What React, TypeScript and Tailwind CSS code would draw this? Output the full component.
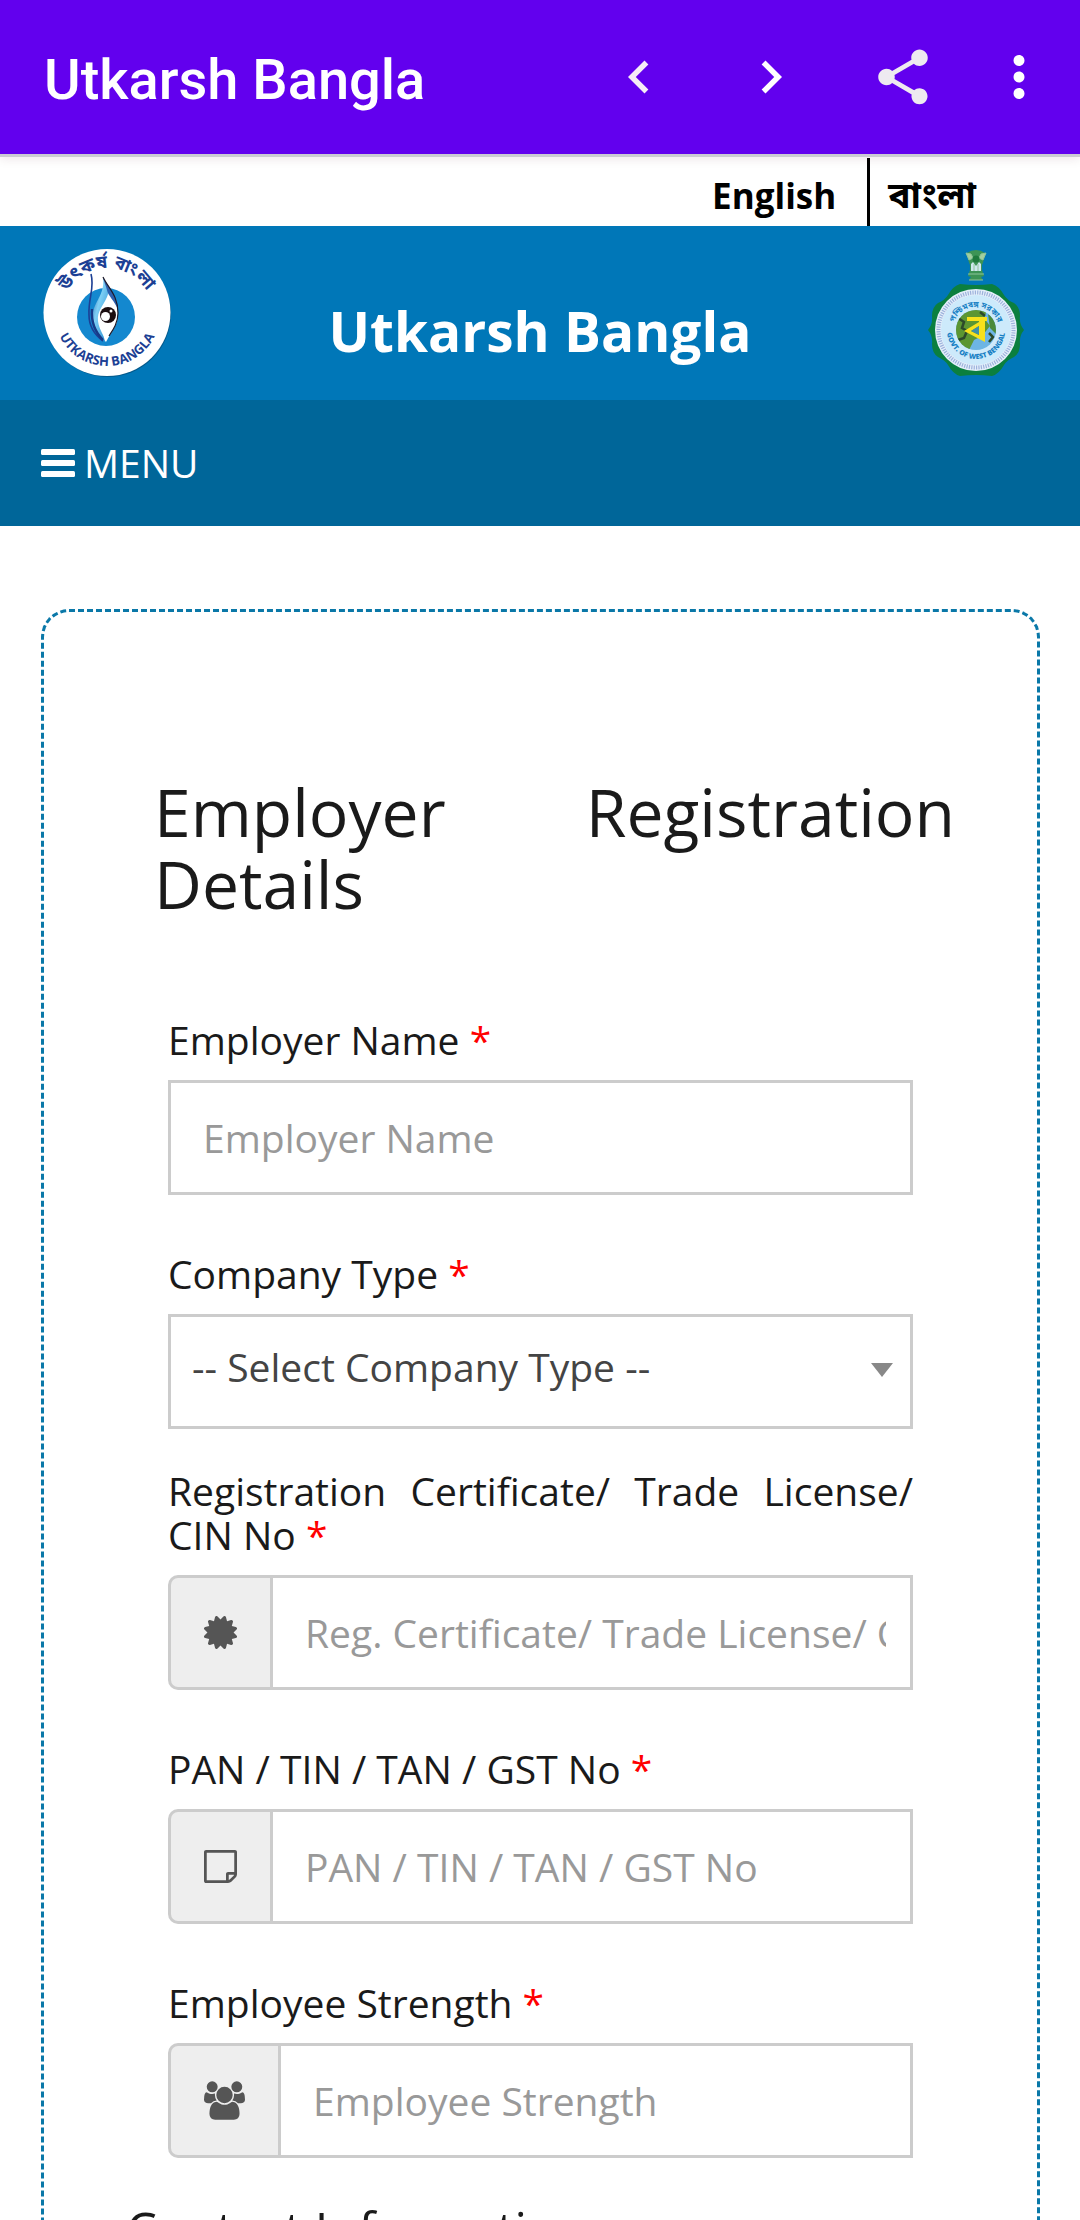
import React, { useState } from 'react';
import { MdChevronLeft, MdChevronRight, MdMoreVert, MdShare } from 'react-icons/md';

interface FieldProps {
  id: string;
  label: string;
  placeholder: string;
  icon?: React.ReactNode;
}

const CertificateIcon: React.FC = () => (
  <svg viewBox="0 128 1536 1536" className="size-[33px]" fill="currentColor" aria-hidden="true">
    <path d="M1376 896l138 135q30 28 20 70-12 41-52 51l-188 48 53 186q12 41-19 70-29 31-70 19l-186-53-48 188q-10 40-51 52-12 2-19 2-31 0-51-22l-135-138-135 138q-28 30-70 20-41-11-51-52l-48-188-186 53q-41 12-70-19-31-29-19-70l53-186-188-48q-40-10-52-51-10-42 20-70l138-135-138-135q-30-28-20-70 12-41 52-51l188-48-53-186q-12-41 19-70 29-31 70-19l186 53 48-188q10-41 51-51 41-12 70 19l135 139 135-139q29-30 70-19 41 10 51 51l48 188 186-53q41-12 70 19 31 29 19 70l-53 186 188 48q40 10 52 51 10 42-20 70z" />
  </svg>
);

const NoteIcon: React.FC = () => (
  <svg viewBox="0 128 1536 1536" className="size-[33px]" fill="currentColor" aria-hidden="true">
    <path d="M1400 1280h-248v248q29-10 41-22l185-185q12-12 22-41zm-280-128h288v-896h-1280v1280h896v-288q0-40 28-68t68-28zm416-928v1024q0 40-20 88t-48 76l-184 184q-28 28-76 48t-88 20h-1024q-40 0-68-28t-28-68v-1344q0-40 28-68t68-28h1344q40 0 68 28t28 68z" />
  </svg>
);

const UsersIcon: React.FC = () => (
  <svg viewBox="0 0 1920 1792" className="h-[39px] w-[41px]" fill="currentColor" aria-hidden="true">
    <path d="M593 896q-162 5-265 128h-134q-82 0-138-40.5t-56-118.5q0-353 124-353 6 0 43.5 21t97.5 42.5 119 21.5q67 0 133-23-5 37-5 66 0 139 81 256zm1071 637q0 120-73 189.5t-194 69.5h-874q-121 0-194-69.5t-73-189.5q0-53 3.5-103.5t14-109 26.5-108.5 43-97.5 62-81 85.5-53.5 111.5-20q10 0 43 21.5t73 48 107 48 135 21.5 135-21.5 107-48 73-48 43-21.5q61 0 111.5 20t85.5 53.5 62 81 43 97.5 26.5 108.5 14 109 3.5 103.5zm-1024-1277q0 106-75 181t-181 75-181-75-75-181 75-181 181-75 181 75 75 181zm704 384q0 159-112.5 271.5t-271.5 112.5-271.5-112.5-112.5-271.5 112.5-271.5 271.5-112.5 271.5 112.5 112.5 271.5zm576 225q0 78-56 118.5t-138 40.5h-134q-103-123-265-128 81-117 81-256 0-29-5-66 66 23 133 23 59 0 119-21.5t97.5-42.5 43.5-21q124 0 124 353zm-128-609q0 106-75 181t-181 75-181-75-75-181 75-181 181-75 181 75 75 181z" />
  </svg>
);

const UtkarshLogo: React.FC = () => (
  <svg viewBox="0 0 128 128" className="size-32" role="img" aria-label="Utkarsh Bangla logo">
    <defs>
      <path id="logo-top" d="M19 64a45 45 0 0 1 90 0" />
      <path id="logo-bottom" d="M11 64a53 53 0 0 0 106 0" />
      <linearGradient id="flame" x1="0" x2="1" y1="0" y2="1">
        <stop offset="0" stopColor="#1b4f9c" />
        <stop offset="0.4" stopColor="#7fd0f5" />
        <stop offset="1" stopColor="#1d86cf" />
      </linearGradient>
    </defs>
    <circle cx="65" cy="65" r="63" fill="#045a8c" />
    <circle cx="64" cy="63.5" r="63.5" fill="#fff" />
    <circle cx="63" cy="68" r="29" fill="#1488cf" />
    {/* flame shaped eye */}
    <path d="M60 28c1 9 15 17 15 37 0 12-7 18-12 28-8-9-14-16-11-28 2-13 12-19 8-37z" fill="#fff" />
    <path d="M60 28c2 9 8 12 4 20-4 9-10 14-9 24 1 9 6 13 7 21-9-8-14-18-12-30 3-13 12-18 10-35z" fill="url(#flame)" />
    <path d="M60 28c4 9 15 17 15 33-3-9-10-14-11-20-1-4-3-8-4-13z" fill="#2c5fae" />
    <path d="M60 28c5 11 15 18 15 36 0 10-5 17-9 23" fill="none" stroke="#1d1a2a" strokeWidth="1.2" />
    <path d="M48 25c4 14-3 24-2 41 0 12 6 20 14 26" fill="none" stroke="#1c3f94" strokeWidth="1.6" />
    <path d="M49 60c-1 13 3 23 11 31" fill="none" stroke="#173a87" strokeWidth="2.4" />
    <circle cx="65" cy="66" r="8" fill="#1b0d10" />
    <circle cx="62.5" cy="67.5" r="4.5" fill="#fff" />
    <circle cx="68" cy="62" r="1.5" fill="#fff" />
    <text className="font-['Noto_Sans_Bengali','Open_Sans',sans-serif] text-[18px] font-bold" fill="#1c3f94" textAnchor="middle">
      <textPath href="#logo-top" startOffset="50%">উৎকর্ষ বাংলা</textPath>
    </text>
    <text className="font-['Open_Sans',sans-serif] text-[13px] font-bold" fill="#1c3f94" textAnchor="middle">
      <textPath href="#logo-bottom" startOffset="50%">UTKARSH BANGLA</textPath>
    </text>
  </svg>
);

const GovernmentSeal: React.FC = () => (
  <svg viewBox="0 0 96 126" className="h-[126px] w-24" role="img" aria-label="Government of West Bengal seal">
    <defs>
      <path id="seal-top" d="M25 80a23 23 0 0 1 46 0" />
      <path id="seal-bottom" d="M19 80a29 29 0 0 0 58 0" />
      <clipPath id="seal-map">
        <circle cx="48" cy="80" r="20" />
      </clipPath>
    </defs>
    {/* lion capital */}
    <path d="M39 3q4-3 9-3t9 3l-1 6q-1 4-2 6v5l2 6-3 1 2 3H41l2-3-3-1 2-6v-5q-2-4-2-8z" fill="#3d9455" />
    <path d="M43 14l2-2 3 4 3-4 2 2v7H43z" fill="#cfe8ee" />
    <path d="M38 3l5 1 2 4-4 2zM58 3l-5 1-2 4 4 2zM41 30h14M40 24h16M46 14v7M50 14v7" fill="#a3cf9e" stroke="#8ec49a" strokeWidth="1" />
    <circle cx="48" cy="9" r="3.5" fill="#1f7a3c" />
    {/* scalloped rim */}
    <path d="M0 80q5-6 4-14 0-9 6-13 7-3 10-8 5-9 12-11 16 2 32 0 7 2 12 11 3 5 10 8 6 4 6 13-1 8 4 14-5 6-4 14 0 9-6 13-7 3-10 8-5 9-12 11-16-2-32 0-7-2-12-11-3-5-10-8-6-4-6-13 1-8-4-14z" fill="#0b7f3f" />
    <circle cx="48" cy="80" r="41" fill="#e4effa" />
    <circle cx="48" cy="80" r="37.5" fill="none" stroke="#9db2dc" strokeWidth="4" strokeDasharray="1.2 1.2" />
    <circle cx="48" cy="80" r="35" fill="#cdeafb" />
    <circle cx="48" cy="80" r="20" fill="#6db5e4" />
    <g clipPath="url(#seal-map)">
      <path d="M26 58h34l-4 10 6 8-8 10-8 4-6 12-14-8z" fill="#5c9632" />
      <path d="M60 64l12 6-4 14-6-6z" fill="#4b8a3b" />
      <path d="M30 68l6 4-2 6 5 3-3 7-6 2M52 62l5 4M61 92l4-5-4-4" fill="none" stroke="#2c4a2a" strokeWidth="2.5" />
    </g>
    <path d="M39 67h20v4h-2v21l-21-11 15-9v-1H39zm12 9l-8 5 8 4z" fill="#f7e11c" fillRule="evenodd" />
    <path d="M43 81l8-5v9z" fill="#3f8fa6" />
    <text className="font-['Noto_Sans_Bengali','Open_Sans',sans-serif] text-[8px] font-bold" fill="#1780c4" textAnchor="middle">
      <textPath href="#seal-top" startOffset="50%">পশ্চিমবঙ্গ সরকার</textPath>
    </text>
    <text className="font-['Open_Sans',sans-serif] text-[7px] font-extrabold" fill="#1780c4" textAnchor="middle">
      <textPath href="#seal-bottom" startOffset="50%">GOVT. OF WEST BENGAL</textPath>
    </text>
  </svg>
);

const FieldLabel: React.FC<{ htmlFor: string; children: React.ReactNode }> = ({ htmlFor, children }) => (
  <label htmlFor={htmlFor} className="mb-[18px] block text-justify leading-[44px]">
    {children} <span className="text-[#f00]">*</span>
  </label>
);

const TextField: React.FC<FieldProps> = ({ id, label, placeholder, icon }) => {
  const [value, setValue] = useState('');

  return (
    <div className="mb-[57px] last:mb-11">
      <FieldLabel htmlFor={id}>{label}</FieldLabel>
      <div className="flex">
        {icon && (
          <span className="flex items-center rounded-l-[10px] border-[3px] border-r-0 border-[#ccc] bg-[#eee] px-[33px] text-[#555]">
            {icon}
          </span>
        )}
        <input
          id={id}
          type="text"
          value={value}
          onChange={(e) => setValue(e.target.value)}
          placeholder={placeholder}
          className="h-[115px] w-full min-w-0 flex-1 border-[3px] border-[#ccc] bg-white pr-6 pl-8 text-[#444] placeholder:text-[#999]"
        />
      </div>
    </div>
  );
};

const AppBar: React.FC = () => (
  <header className="flex h-[157px] shrink-0 items-center justify-between border-b-[3px] border-[#cbcbd3] bg-[#6200ee] pr-[11px] pl-[44px] font-[Roboto,sans-serif] text-white shadow-[0_2px_10px_rgba(80,0,40,0.1)]">
    <h1 className="pt-1.5 text-[56px] leading-16 font-medium">Utkarsh Bangla</h1>
    <div className="flex text-[66px]">
      <button type="button" aria-label="Back" className="flex w-[132px] justify-center text-[#f6edf6]">
        <MdChevronLeft />
      </button>
      <button type="button" aria-label="Forward" className="flex w-[132px] justify-center">
        <MdChevronRight />
      </button>
      <button type="button" aria-label="Share" className="flex w-[132px] justify-center text-[#eeeaf0]">
        <MdShare />
      </button>
      <button type="button" aria-label="More options" className="flex w-[100px] justify-center">
        <MdMoreVert />
      </button>
    </div>
  </header>
);

export default function App() {
  const [companyType, setCompanyType] = useState('');

  return (
    <div className="flex h-screen flex-col overflow-hidden bg-white font-['Open_Sans',sans-serif] text-[39px] text-[#1a1a1a]">
      <AppBar />

      <main className="min-h-0 flex-1 overflow-y-auto [scrollbar-width:none]">
        <div className="flex h-[69px] justify-end pt-px pr-[104px] leading-[76px] font-bold text-black">
          <a href="#english" className="border-r-[3px] border-black pr-[31px] text-[35px]">English</a>
          <a href="#bangla" lang="bn" className="pt-[3px] pl-[18px] font-['Noto_Sans_Bengali','Open_Sans',sans-serif] text-[37px]">বাংলা</a>
        </div>

        <div className="grid h-[174px] grid-cols-[1fr_auto_1fr] items-center bg-[#0077b8] px-[43px]">
          <UtkarshLogo />
          <h2 className="pt-9 text-[55px] leading-[78px] font-bold text-white">Utkarsh Bangla</h2>
          <div className="flex justify-end pr-[13px]">
            <GovernmentSeal />
          </div>
        </div>

        <nav className="flex h-[126px] items-center bg-[#006699] px-[41px] text-white">
          <button type="button" className="flex items-center gap-[9px]">
            <svg viewBox="0 0 34 28" className="h-7 w-[34px]" fill="currentColor" aria-hidden="true">
              <rect width="34" height="6" rx="1.5" />
              <rect y="11" width="34" height="6" rx="1.5" />
              <rect y="22" width="34" height="6" rx="1.5" />
            </svg>
            MENU
          </button>
        </nav>

        <section className="mr-10 ml-[41px] mt-[83px] rounded-[28px] border-[3px] border-dashed border-[#0a78a8] px-[82px] pt-[163px] pb-24">
          <h3 className="mb-[99px] pl-7 text-justify text-[66px] leading-[72px]">Employer Registration Details</h3>

          <form>
            <div className="flow-root px-[42px]">
              <TextField id="employer-name" label="Employer Name" placeholder="Employer Name" />

              <div className="mb-10">
                <FieldLabel htmlFor="company-type">Company Type</FieldLabel>
                <div className="relative">
                  <select
                    id="company-type"
                    value={companyType}
                    onChange={(e) => setCompanyType(e.target.value)}
                    className="h-[115px] w-full appearance-none border-[3px] border-[#ccc] bg-white px-[21px] pb-2 text-[#444]"
                  >
                    <option value="">-- Select Company Type --</option>
                    <option value="private">Private Limited</option>
                    <option value="public">Public Limited</option>
                  </select>
                  <svg viewBox="0 0 22 14" className="pointer-events-none absolute top-[49px] right-5 h-3.5 w-[22px]" fill="#888" aria-hidden="true">
                    <path d="M0 0h22L11 14z" />
                  </svg>
                </div>
              </div>

              <TextField
                id="registration-no"
                label="Registration Certificate/ Trade License/ CIN No"
                placeholder="Reg. Certificate/ Trade License/ CIN No"
                icon={<CertificateIcon />}
              />
              <TextField id="pan-no" label="PAN / TIN / TAN / GST No" placeholder="PAN / TIN / TAN / GST No" icon={<NoteIcon />} />
              <TextField id="employee-strength" label="Employee Strength" placeholder="Employee Strength" icon={<UsersIcon />} />
            </div>

            <h4 className="text-[49px] leading-[54px]">Contact Information</h4>
          </form>
        </section>
      </main>
    </div>
  );
}
